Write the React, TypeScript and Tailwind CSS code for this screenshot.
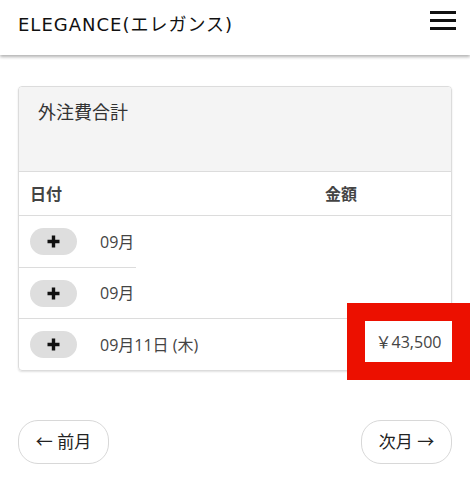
const jp = { fontFamily: '"Open Sans", "Noto Sans CJK JP", sans-serif' };

function PlusButton() {
  return (
    <div className="flex h-[27px] w-[47px] items-center justify-center rounded-full bg-[#dedede]">
      <svg width="15" height="15" viewBox="0 0 15 15">
        <path d="M7.5 1.5v12M1.5 7.5h12" stroke="#111" strokeWidth="3.4" />
      </svg>
    </div>
  );
}

export default function App() {
  const rows = [
    { label: '09月', h: 'h-[51px]', border: 'partial' },
    { label: '09月', h: 'h-[50px]', border: 'full' },
    { label: '09月11日 (木)', h: 'h-[51px]', border: 'none' },
  ];

  return (
    <div className="relative h-[500px] w-[470px] overflow-hidden bg-white text-[#333]" style={jp}>
      <header className="flex h-[55px] items-start justify-between pl-[18px] pr-[14px] shadow-[0_2px_3px_rgba(0,0,0,0.3)]">
        <span
          className="mt-[12px] text-[18px] leading-[26px] tracking-[1px] text-[#111]"
          style={{ fontFamily: '"DejaVu Sans", "Noto Sans CJK JP", sans-serif' }}
        >
          ELEGANCE(エレガンス)
        </span>
        <div className="mt-[11px] flex w-[26px] flex-col gap-[5px]">
          <span className="block h-[3px] bg-[#111]" />
          <span className="block h-[3px] bg-[#111]" />
          <span className="block h-[3px] bg-[#111]" />
        </div>
      </header>

      <main className="px-[18px] pt-[31px]">
        <div className="overflow-hidden rounded-[4px] border border-[#dcdcdc] shadow-[0_1px_2px_rgba(0,0,0,0.12)]">
          <div className="h-[85px] border-b border-[#dcdcdc] bg-[#f4f4f4] px-[19px] pt-[12px] text-[18px] text-[#333]">
            外注費合計
          </div>
          <div className="flex h-[44px] items-center border-b border-[#dcdcdc] px-[11px] text-[16px] font-bold text-[#444]">
            <span className="w-[295px]">日付</span>
            <span>金額</span>
          </div>
          {rows.map((r, i) => (
            <div key={i} className="relative">
              <div className={`flex ${r.h} items-center gap-[23px] px-[11px] text-[16px] text-[#444]`}>
                <PlusButton />
                <span>{r.label}</span>
              </div>
              {r.border === 'full' && <div className="h-px bg-[#dcdcdc]" />}
              {r.border === 'partial' && <div className="h-px w-[117px] bg-[#dcdcdc]" />}
            </div>
          ))}
        </div>

        <div className="mt-[49px] flex justify-between">
          <button className="flex h-[44px] w-[91px] items-center justify-center rounded-[20px] border border-[#d8d8d8] bg-white text-[17px] text-[#222]">
            ← 前月
          </button>
          <button className="flex h-[44px] w-[91px] items-center justify-center rounded-[20px] border border-[#d8d8d8] bg-white text-[17px] text-[#222]">
            次月 →
          </button>
        </div>
      </main>

      <div className="absolute left-[347px] top-[303px] flex h-[77px] w-[123px] bg-[#ec1000] pl-[18px] pt-[18px]">
        <div className="flex h-[41px] w-[87px] items-center justify-center bg-white text-[16px] text-[#444]">
          ￥43,500
        </div>
      </div>
    </div>
  );
}
